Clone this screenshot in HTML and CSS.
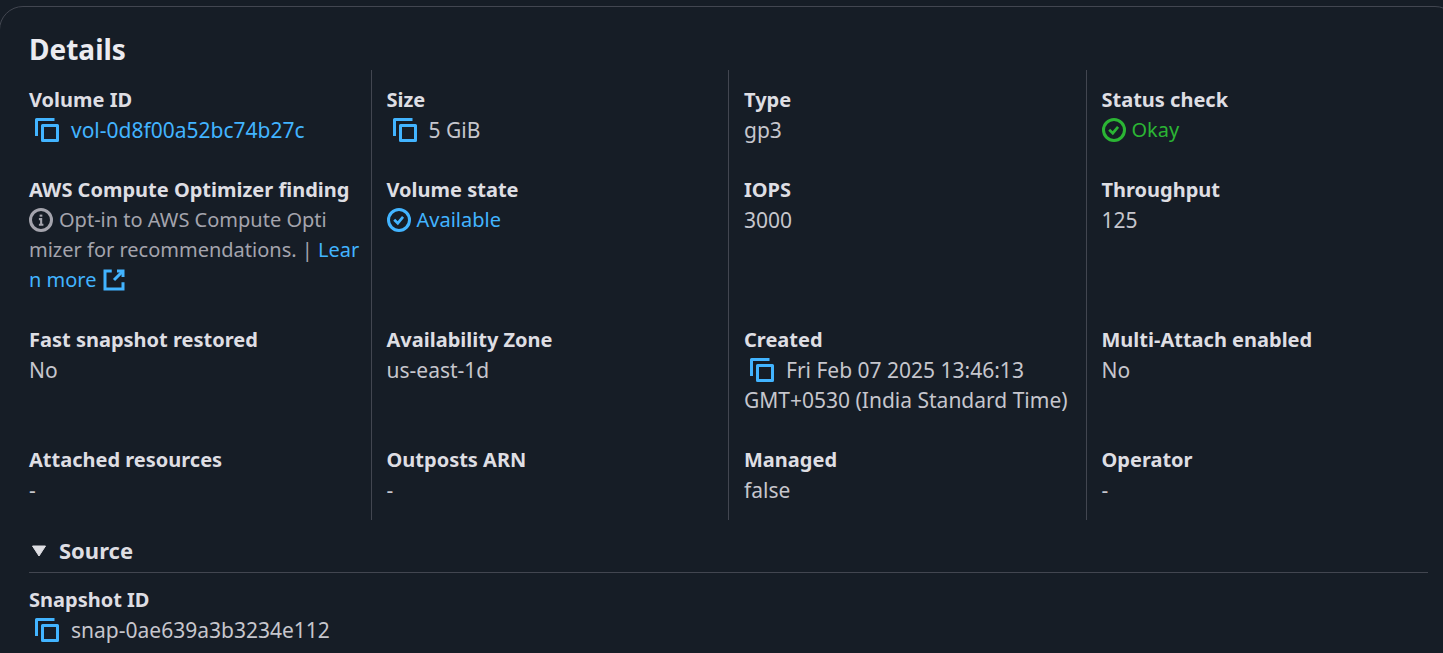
FILE: index.html
```
<!DOCTYPE html>
<html lang="en">
<head>
<meta charset="utf-8">
<title>Volume details</title>
<meta name="viewport" content="width=device-width, initial-scale=1">
<link rel="stylesheet" href="styles.css">
</head>
<body>
<svg class="sprite" aria-hidden="true">
  <symbol id="copy" viewBox="0 0 24 24"><path d="M1.5 18V1.5H19.5"/><path d="M7.5 7.5h15v15h-15z"/></symbol>
  <symbol id="check" viewBox="0 0 16 16"><circle cx="8" cy="8" r="7"/><path stroke-width="1.8" d="m4.8 7.8 2.4 2.3 3.5-4.2"/></symbol>
  <symbol id="info" viewBox="0 0 16 16"><circle cx="8" cy="8" r="7"/><path stroke-width="1.4" d="M8.1 11V7.4H6.6M6.6 11.2h3"/><path stroke-width="1.8" d="M8 5.8V4.4"/></symbol>
  <symbol id="external" viewBox="0 0 16 16"><path d="M10 2h4v4"/><path d="m8 8 6-6"/><path d="M14 9.5V14H2V2h4.5"/></symbol>
</svg>
<main class="panel">
  <h2 class="title">Details</h2>
  <dl class="grid">
    <div class="cell"><dt>Volume ID</dt><dd><button class="copy" aria-label="Copy volume ID"><svg class="icon"><use href="#copy"/></svg></button><a class="link" href="#volume">vol-0d8f00a52bc74b27c</a></dd></div>
    <div class="cell"><dt>Size</dt><dd><button class="copy" aria-label="Copy size"><svg class="icon"><use href="#copy"/></svg></button>5 GiB</dd></div>
    <div class="cell"><dt>Type</dt><dd>gp3</dd></div>
    <div class="cell"><dt>Status check</dt><dd class="success"><svg class="icon status"><use href="#check"/></svg>Okay</dd></div>

    <div class="cell"><dt>AWS Compute Optimizer finding</dt><dd class="muted"><svg class="icon status"><use href="#info"/></svg>Opt-in to AWS Compute Opti<br>mizer for recommendations. | <a class="link" href="#learn">Lear<br>n more <svg class="icon"><use href="#external"/></svg></a></dd></div>
    <div class="cell"><dt>Volume state</dt><dd class="available"><svg class="icon status"><use href="#check"/></svg>Available</dd></div>
    <div class="cell"><dt>IOPS</dt><dd>3000</dd></div>
    <div class="cell"><dt>Throughput</dt><dd>125</dd></div>

    <div class="cell"><dt>Fast snapshot restored</dt><dd>No</dd></div>
    <div class="cell"><dt>Availability Zone</dt><dd>us-east-1d</dd></div>
    <div class="cell"><dt>Created</dt><dd><button class="copy" aria-label="Copy creation time"><svg class="icon"><use href="#copy"/></svg></button>Fri Feb 07 2025 13:46:13 GMT+0530 (India Standard Time)</dd></div>
    <div class="cell"><dt>Multi-Attach enabled</dt><dd>No</dd></div>

    <div class="cell"><dt>Attached resources</dt><dd>-</dd></div>
    <div class="cell"><dt>Outposts ARN</dt><dd>-</dd></div>
    <div class="cell"><dt>Managed</dt><dd>false</dd></div>
    <div class="cell"><dt>Operator</dt><dd>-</dd></div>
  </dl>
  <section>
    <h3 class="section-head"><button class="toggle" aria-expanded="true"><svg class="caret" viewBox="0 0 16 14" aria-hidden="true"><path d="M1.5 3h13L8 13z"/></svg>Source</button></h3>
    <dl class="source"><dt>Snapshot ID</dt><dd><button class="copy" aria-label="Copy snapshot ID"><svg class="icon"><use href="#copy"/></svg></button>snap-0ae639a3b3234e112</dd></dl>
  </section>
</main>
</body>
</html>
```
FILE: styles.css
```
body {
  margin: 0;
  overflow: hidden;
  background: #161d26;
  color: #c6c6cd;
  font: 20px/30px "Noto Sans", "Open Sans", sans-serif;
}
.sprite {
  position: absolute;
  width: 0;
  height: 0;
}
/* The panel runs past both window edges by its outer gutter. */
.panel {
  margin: 6px -16px 0 -1px;
  padding: 24px 30px 30px 29px;
  border: 1px solid #424650;
  border-radius: 24px;
}
.title {
  margin: 0 0 3px;
  color: #ebebf0;
  font-size: 28px;
  line-height: 36px;
}
.grid {
  display: grid;
  grid-template-columns: repeat(4, minmax(0, 1fr));
  column-gap: 15px;
  margin: 0 0 0 -16px;
}
.cell {
  padding: 15px 0 15px 15px;
  border-left: 1px solid #424650;
}
.cell:nth-child(4n + 1) {
  border-left-color: transparent;
}
dt {
  color: #dedee3;
  font-weight: 700;
}
dd {
  margin: 0;
  font-size: 21px;
}
.icon {
  width: 24px;
  height: 24px;
  vertical-align: middle;
  margin-top: -4px;
  fill: none;
  stroke: currentColor;
  stroke-width: 2;
}
.status {
  margin-right: 6px;
}
.copy {
  margin: 0 6px 0 0;
  padding: 0 6px;
  border: 0;
  background: none;
  color: #42b4ff;
  font: inherit;
}
.copy .icon {
  stroke-width: 3;
  stroke-linejoin: round;
}
.link {
  color: #42b4ff;
  text-decoration: none;
}
.muted {
  color: #a4a4ad;
  font-size: 20px;
  white-space: nowrap;
}
.available {
  color: #42b4ff;
}
.available,
.success {
  font-size: 20px;
}
.success {
  color: #2bb534;
}
.section-head {
  margin: 12px 0 12px;
  padding-bottom: 4px;
  border-bottom: 1px solid #424650;
  font-size: 22px;
  line-height: 36px;
}
.toggle {
  display: flex;
  align-items: center;
  gap: 12px;
  padding: 0 0 0 2px;
  border: 0;
  background: none;
  color: #dedee3;
  font: inherit;
}
.caret {
  width: 16px;
  height: 14px;
  fill: currentColor;
  stroke: currentColor;
  stroke-linejoin: round;
}
.source {
  margin: 0;
}
```
